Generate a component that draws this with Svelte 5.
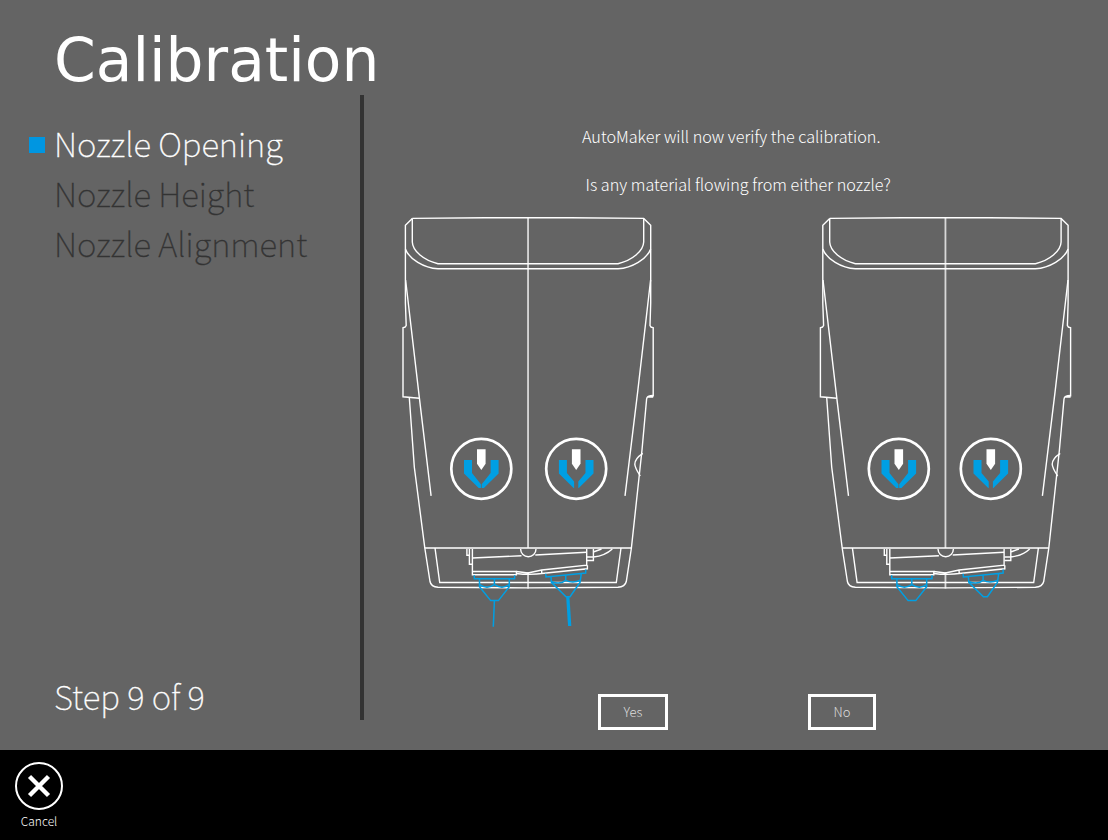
<script>
  const steps = ['Nozzle Opening', 'Nozzle Height', 'Nozzle Alignment'];
  const active = 0;
  const heads = [
    { flowing: true, left: 400, logos: [481.3, 576.2] },
    { flowing: false, left: 399.6, logos: [481.4, 573.4] }
  ];
</script>

{#snippet logo(x, gap)}
  <g transform="translate({x} 468.8)">
    <circle r="30" stroke-width="2.7" />
    <path class="white" d="M-4.3-19.5H4.3V-5L0 1.3L-4.3-5Z" />
    <path class="blue" d="M-17.3-8.9H-9.3V4.2L{-gap} {gap > 1 ? 12.6 : 15.4}V19.2H-2.6L-17.3 4.8Z" />
    <path class="blue" d="M17.3-8.9H9.3V4.2L{gap} {gap > 1 ? 12.6 : 15.4}V19.2H2.6L17.3 4.8Z" />
  </g>
{/snippet}

<div class="screen">
  <main>
    <aside>
      <h1>Calibration</h1>
      <ul>
        {#each steps as s, i}
          <li class:active={i === active}><i></i><span>{s}</span></li>
        {/each}
      </ul>
      <p class="count">Step 9 of 9</p>
    </aside>
    <div class="rule"></div>
    <section>
      <p class="msg first">AutoMaker will now verify the calibration.</p>
      <p class="msg second">Is any material flowing from either nozzle?</p>
      <div class="heads">
        {#each heads as h}
          <svg viewBox="{h.left} 210 257 425" width="257" height="425">
            <g class="line">
              <path d="M412.3 218.4L485 217.7H571L643.7 218.4L650.7 225.2V303L650 325.5Q650.5 327.5 653.2 327.8V396.6" />
              <path d="M412.3 218.4L405.4 225.2V303L406.2 325.5Q405.5 327.5 403 327.8V396.8L419.4 398.2" />
              <path d="M412.3 218.4V242C412.6 251 424 260.6 438 263.7H618C632 260.6 643.4 251 643.7 242V218.4" />
              <path d="M405.4 249C409 259 424 268 438 268.8H618C632 268 647 259 650.7 249" />
              <path d="M405.6 280L419.4 398.2L431.1 495.8M650.6 280L637.7 391.7L625 495.8" />
              <path d="M409.3 397.5L414.3 467L424.8 548L430 581.5Q431 586.8 438 587.3L528 587.9L618 587.3Q625 586.8 626.3 581.5L631.4 548L642 450L646.6 399Q647 395.5 653.2 395.5M647 397H653.2" />
              <path d="M642.8 453.3C638 456.5 634.8 460.5 634.8 464.2C635 468 637 471 640.3 476" />
              <path d="M424.8 548H631.4M435 548L439.7 582.5H616.3L621 548" />
              <path d="M520.6 549A7.7 7.7 0 0 0 536 549" />
              <path d="M466.9 549V555.3H469.3M469.4 549V564.3H472.3M472.4 549V574.7H516.4V571.5H472.4M472.4 558L521.5 555.7M535.3 555L586.7 552.2" />
              <path d="M586.7 549V565.2L541.7 570L528 573L516.4 571.5M516.4 573.5Q530 575.4 544 573.3L587.4 568.8V565.2M541.7 570V573.5" />
              <path d="M593.4 549V560.5H587M587 557H593.4C601 556.2 608 553 612.3 549M593.4 552L601.5 549" />
              <path stroke-opacity=".75" stroke-width="1.8" d="M528.05 218V548M528.05 572V588.5" />
            </g>
            <g class="line nozzle">
              <path d="M474.3 575.3V578.7H514.6V575.3M479.5 578.7V586.7L490.7 600.6H498.4L509.3 586.7V578.7M494.4 578.7V585M479.5 584.7Q487 589.8 494.4 584.7Q502 589.8 509.3 584.7" />
              <path d="M545.7 573.7L546 577L585.7 573V569.4M551 576.6L551.4 582.4L566 596.7H570L580 582.5L581.3 573.6M565.7 575.2V580.5M551.4 581.3Q559.5 585.3 565.7 580.3Q573 583.9 581 579.8" />
              {#if h.flowing}
                <path d="M494.4 600.6L493.3 626.8" />
                <path stroke-width="3.3" d="M567.8 597L569.7 626" />
              {/if}
            </g>
            <g class="line">
              {@render logo(h.logos[0], 0.4)}
              {@render logo(h.logos[1], 2.1)}
            </g>
          </svg>
        {/each}
      </div>
      <div class="buttons">
        <button class="yes">Yes</button>
        <button class="no">No</button>
      </div>
    </section>
  </main>
  <footer>
    <div class="cancel">
      <svg viewBox="0 0 48 48" width="48" height="48">
        <circle cx="24" cy="24" r="23" fill="none" stroke="#fff" stroke-width="2" />
        <path d="M14.5 14.5L33.5 33.5M33.5 14.5L14.5 33.5" stroke="#fff" stroke-width="4.4" />
      </svg>
      <span>Cancel</span>
    </div>
  </footer>
</div>

<style>
  :global(body) { margin: 0; background: #646464; }
  .screen {
    width: 1108px; height: 840px; display: flex; flex-direction: column;
    background: #646464; color: #fff; overflow: hidden;
    font-family: "Noto Sans CJK SC", "Noto Sans", sans-serif; font-weight: 300;
  }
  main { height: 750px; display: flex; }
  aside { width: 360px; display: flex; flex-direction: column; }
  h1 {
    margin: 25px 0 0 54px; height: 71px; white-space: nowrap;
    font: 400 59.8px/71px "DejaVu Sans", sans-serif;
  }
  ul { list-style: none; margin: 24px 0 0; padding: 0; }
  li { height: 50px; display: flex; align-items: center; padding-left: 29px; color: #333; font-size: 33px; font-weight: 100; line-height: 46px; white-space: nowrap; }
  li i { width: 16px; height: 16px; margin-right: 9px; }
  li span { height: 50px; }
  li span, .count { -webkit-text-stroke: 0.35px currentColor; }
  li.active { color: #fff; }
  li.active i { background: #0096e1; }
  .count { margin: auto 0 29px 54px; font-size: 33.1px; font-weight: 100; line-height: 50px; }
  .rule { width: 4px; height: 625px; margin-top: 95px; background: #333; }
  section { flex: 1; display: flex; flex-direction: column; }
  .msg { margin: 0; font-size: 16.2px; line-height: 24px; white-space: nowrap; }
  .first { margin: 124px 0 0 218px; }
  .second { margin: 24px 0 0 221.5px; }
  .heads { display: flex; gap: 160px; margin: 14px 0 0 36px; height: 425px; }
  .heads svg { flex: none; }
  .line { fill: none; stroke: #fff; stroke-width: 1.4; }
  .nozzle { stroke: #009fe3; stroke-width: 1.5; }
  .white { fill: #fff; stroke: none; }
  .blue { fill: #009fe3; stroke: none; }
  .buttons { display: flex; gap: 140px; margin: 59px 0 0 234px; }
  button { box-sizing: border-box; height: 36px; padding: 0; border: 3px solid #fff; background: none; color: #ddd; font: inherit; font-size: 13px; line-height: 30px; }
  .yes { width: 70px; }
  .no { width: 68px; }
  footer { height: 90px; background: #000; }
  .cancel { width: 48px; margin: 12px 0 0 15px; display: flex; flex-direction: column; align-items: center; font-size: 12px; line-height: 22px; }
</style>
